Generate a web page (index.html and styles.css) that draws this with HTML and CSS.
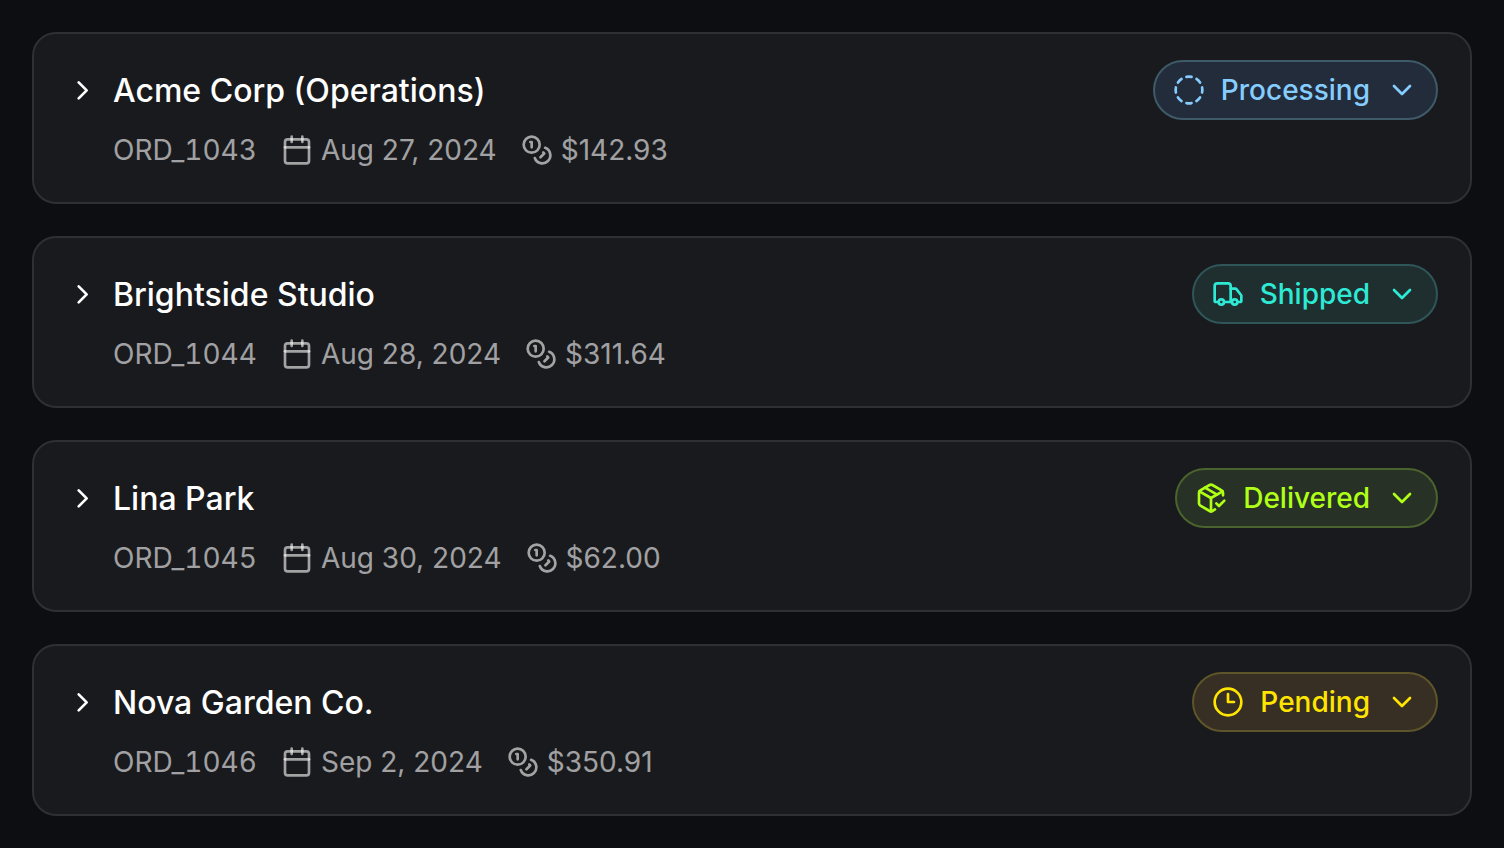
FILE: index.html
```html
<!DOCTYPE html>
<html lang="en">
<head>
<meta charset="utf-8">
<meta name="viewport" content="width=device-width, initial-scale=1">
<title>Orders</title>
<link rel="stylesheet" href="styles.css">
</head>
<body>
<svg class="sprite" aria-hidden="true">
  <symbol id="chevron-right" viewBox="0 0 24 24"><path d="m9.5 17.5 6-6-6-6"/></symbol>
  <symbol id="chevron-down" viewBox="0 0 24 24"><path d="m6 9 6 6 6-6"/></symbol>
  <symbol id="calendar" viewBox="0 0 24 24"><path d="M8 2v4"/><path d="M16 2v4"/><rect width="18" height="18" x="3" y="4" rx="2"/><path d="M3 10h18"/></symbol>
  <symbol id="coins" viewBox="0 0 24 24"><circle cx="8" cy="8" r="6"/><path d="M18.09 10.37A6 6 0 1 1 10.34 18"/><path d="M7 6h1v4"/><path d="m16.71 13.88.7.71-2.82 2.82"/></symbol>
  <symbol id="dashed" viewBox="0 0 24 24"><path d="M10.1 2.182a10 10 0 0 1 3.8 0"/><path d="M13.9 21.818a10 10 0 0 1-3.8 0"/><path d="M17.609 3.721a10 10 0 0 1 2.69 2.7"/><path d="M2.182 13.9a10 10 0 0 1 0-3.8"/><path d="M20.279 17.609a10 10 0 0 1-2.7 2.69"/><path d="M21.818 10.1a10 10 0 0 1 0 3.8"/><path d="M3.721 6.391a10 10 0 0 1 2.7-2.69"/><path d="M6.391 20.279a10 10 0 0 1-2.69-2.7"/></symbol>
  <symbol id="truck" viewBox="0 0 24 24"><path d="M14 18V6a2 2 0 0 0-2-2H4a2 2 0 0 0-2 2v11a1 1 0 0 0 1 1h2"/><path d="M15 18H9"/><path d="M19 18h2a1 1 0 0 0 1-1v-3.65a1 1 0 0 0-.22-.624l-3.48-4.35A1 1 0 0 0 17.52 8H14"/><circle cx="17" cy="18" r="2"/><circle cx="7" cy="18" r="2"/></symbol>
  <symbol id="package" viewBox="0 0 24 24"><path d="m16 16 2 2 4-4"/><path d="M21 10V8a2 2 0 0 0-1-1.73l-7-4a2 2 0 0 0-2 0l-7 4A2 2 0 0 0 3 8v8a2 2 0 0 0 1 1.73l7 4a2 2 0 0 0 2 0l2-1.14"/><path d="m7.5 4.27 9 5.15"/><path d="M3.29 7 12 12l8.71-5"/><path d="M12 22V12"/></symbol>
  <symbol id="clock" viewBox="0 0 24 24"><circle cx="12" cy="12" r="10"/><path d="M12 6v6h4.5"/></symbol>
</svg>
<main class="orders">
  <article class="card">
    <div class="head">
      <button class="toggle" type="button" aria-expanded="false"><svg class="icon"><use href="#chevron-right"/></svg><span>Acme Corp (Operations)</span></button>
      <button class="status processing" type="button"><svg class="icon"><use href="#dashed"/></svg><span>Processing</span><svg class="icon"><use href="#chevron-down"/></svg></button>
    </div>
    <div class="meta"><span class="order-id">ORD_1043</span><span class="fact"><svg class="icon"><use href="#calendar"/></svg>Aug 27, 2024</span><span class="fact"><svg class="icon"><use href="#coins"/></svg>$142.93</span></div>
  </article>
  <article class="card">
    <div class="head">
      <button class="toggle" type="button" aria-expanded="false"><svg class="icon"><use href="#chevron-right"/></svg><span>Brightside Studio</span></button>
      <button class="status shipped" type="button"><svg class="icon"><use href="#truck"/></svg><span>Shipped</span><svg class="icon"><use href="#chevron-down"/></svg></button>
    </div>
    <div class="meta"><span class="order-id">ORD_1044</span><span class="fact"><svg class="icon"><use href="#calendar"/></svg>Aug 28, 2024</span><span class="fact"><svg class="icon"><use href="#coins"/></svg>$311.64</span></div>
  </article>
  <article class="card">
    <div class="head">
      <button class="toggle" type="button" aria-expanded="false"><svg class="icon"><use href="#chevron-right"/></svg><span>Lina Park</span></button>
      <button class="status delivered" type="button"><svg class="icon"><use href="#package"/></svg><span>Delivered</span><svg class="icon"><use href="#chevron-down"/></svg></button>
    </div>
    <div class="meta"><span class="order-id">ORD_1045</span><span class="fact"><svg class="icon"><use href="#calendar"/></svg>Aug 30, 2024</span><span class="fact"><svg class="icon"><use href="#coins"/></svg>$62.00</span></div>
  </article>
  <article class="card">
    <div class="head">
      <button class="toggle" type="button" aria-expanded="false"><svg class="icon"><use href="#chevron-right"/></svg><span>Nova Garden Co.</span></button>
      <button class="status pending" type="button"><svg class="icon"><use href="#clock"/></svg><span>Pending</span><svg class="icon"><use href="#chevron-down"/></svg></button>
    </div>
    <div class="meta"><span class="order-id">ORD_1046</span><span class="fact"><svg class="icon"><use href="#calendar"/></svg>Sep 2, 2024</span><span class="fact"><svg class="icon"><use href="#coins"/></svg>$350.91</span></div>
  </article>
</main>
</body>
</html>
```
FILE: styles.css
```css
* { box-sizing: border-box; }
body {
  margin: 0;
  background: #0d0e12;
  color: #fff;
  font-family: Inter, "Liberation Sans", sans-serif;
}
.sprite { position: absolute; width: 0; height: 0; }
.orders { display: grid; gap: 32px; padding: 32px; }
.card {
  display: grid;
  gap: 10px;
  padding: 26px 32px 32px;
  border: 2px solid #2f3033;
  border-radius: 24px;
  background: #191a1d;
}
.head { display: flex; align-items: center; justify-content: space-between; gap: 24px; }
button { border: 0; background: none; color: inherit; font: inherit; cursor: pointer; }
.icon {
  flex: none;
  width: 32px;
  height: 32px;
  fill: none;
  stroke: currentColor;
  stroke-width: 2;
  stroke-linecap: round;
  stroke-linejoin: round;
}
.toggle {
  display: flex;
  align-items: center;
  gap: 15px;
  padding: 2px 0 0;
  font-size: 32px;
  font-weight: 500;
  line-height: 48px;
  text-align: left;
}
.status {
  display: flex;
  align-items: center;
  gap: 16px;
  height: 60px;
  padding: 0 18px;
  border: 2px solid;
  border-radius: 30px;
  font-size: 28px;
  font-weight: 500;
  line-height: 40px;
}
.processing { color: #86cdff; background: #232c3b; border-color: #3f5a68; }
.shipped { color: #2eead5; background: #1f2e2f; border-color: #2f5659; }
.delivered { color: #b0ff17; background: #283126; border-color: #4b642d; }
.pending { color: #ffe500; background: #372e24; border-color: #5f552a; }
.meta {
  display: flex;
  flex-wrap: wrap;
  gap: 24px;
  padding-left: 47px;
  color: rgba(255, 255, 255, 0.6);
  font-size: 28px;
  line-height: 40px;
}
.order-id { font-variant-numeric: tabular-nums; }
.fact { display: flex; align-items: center; gap: 8px; }
```
